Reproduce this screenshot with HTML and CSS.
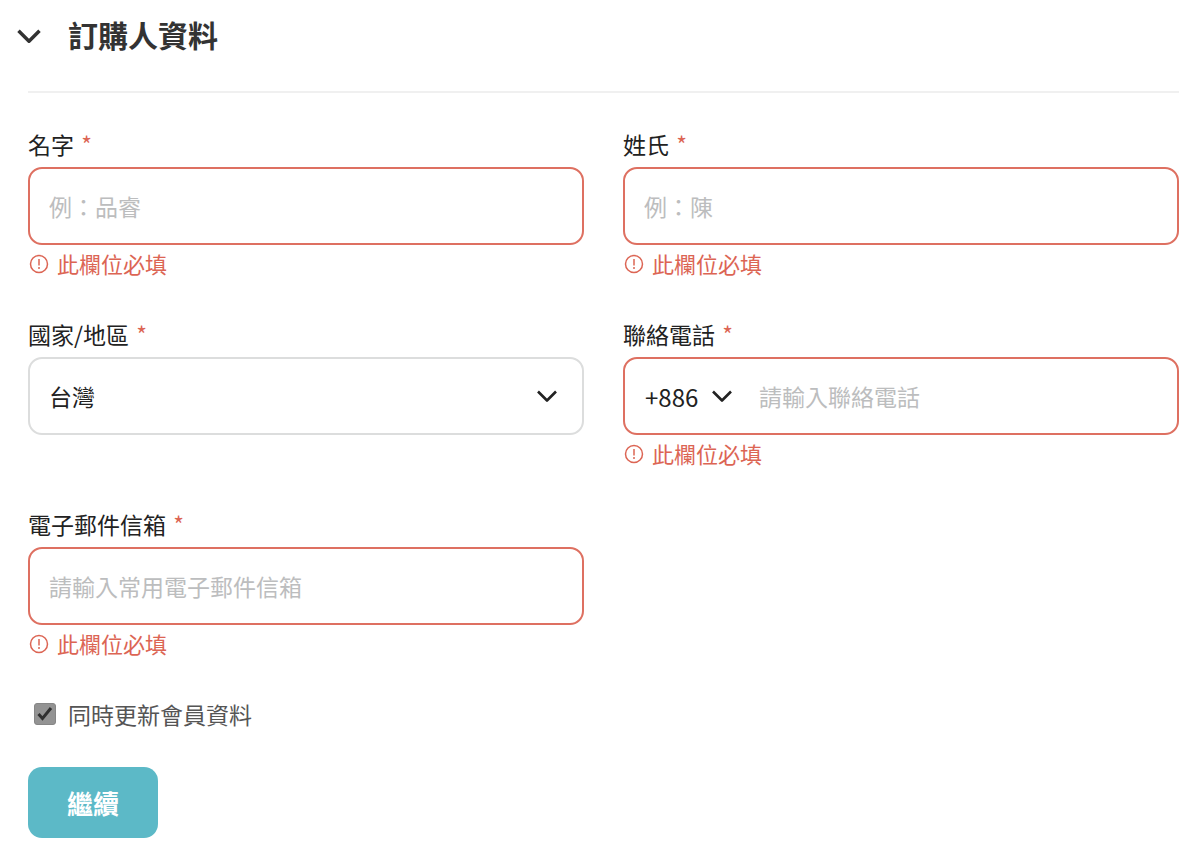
FILE: index.html
```
<!DOCTYPE html>
<html lang="zh-Hant">
<head>
    <meta charset="UTF-8">
    <meta name="viewport" content="width=device-width, initial-scale=1">
    <title>訂購人資料</title>
    <link rel="stylesheet" href="styles.css">
</head>
<body>
    <svg class="icon-defs" aria-hidden="true">
        <symbol id="icon-chevron" viewBox="0 0 24 24">
            <path d="M3 7.5l9 9 9-9"/>
        </symbol>
        <symbol id="icon-alert" viewBox="0 0 20 20">
            <circle cx="10" cy="10" r="8.5"/>
            <path d="M10 5v6.5M10 13v2"/>
        </symbol>
    </svg>

    <form class="order-form" novalidate>
        <header class="section-header">
            <button type="button" class="toggle" aria-label="收合">
                <svg class="chevron chevron-large"><use href="#icon-chevron"/></svg>
            </button>
            <h2>訂購人資料</h2>
        </header>

        <div class="fields">
            <div class="field">
                <label for="first-name">名字 <span class="required">*</span></label>
                <input class="control invalid" type="text" id="first-name" placeholder="例：品睿">
                <p class="error"><svg class="alert"><use href="#icon-alert"/></svg>此欄位必填</p>
            </div>

            <div class="field">
                <label for="last-name">姓氏 <span class="required">*</span></label>
                <input class="control invalid" type="text" id="last-name" placeholder="例：陳">
                <p class="error"><svg class="alert"><use href="#icon-alert"/></svg>此欄位必填</p>
            </div>

            <div class="field">
                <label for="country">國家/地區 <span class="required">*</span></label>
                <div class="select-wrap">
                    <select class="control" id="country">
                        <option>台灣</option>
                    </select>
                    <svg class="chevron"><use href="#icon-chevron"/></svg>
                </div>
            </div>

            <div class="field">
                <label for="phone">聯絡電話 <span class="required">*</span></label>
                <div class="control invalid phone">
                    <div class="code-wrap">
                        <select class="code" id="code" aria-label="國碼">
                            <option>+886</option>
                        </select>
                        <svg class="chevron"><use href="#icon-chevron"/></svg>
                    </div>
                    <input class="phone-input" type="tel" id="phone" placeholder="請輸入聯絡電話">
                </div>
                <p class="error"><svg class="alert"><use href="#icon-alert"/></svg>此欄位必填</p>
            </div>

            <div class="field">
                <label for="email">電子郵件信箱 <span class="required">*</span></label>
                <input class="control invalid" type="email" id="email" placeholder="請輸入常用電子郵件信箱">
                <p class="error"><svg class="alert"><use href="#icon-alert"/></svg>此欄位必填</p>
            </div>
        </div>

        <div class="update">
            <div class="check-wrap">
                <input type="checkbox" id="update-member" checked>
                <svg class="tick" viewBox="0 0 22 22"><path d="M4.5 11l4 4.500L17 5"/></svg>
            </div>
            <label for="update-member">同時更新會員資料</label>
        </div>

        <button type="submit" class="submit">繼續</button>
    </form>
</body>
</html>
```
FILE: styles.css
```
* {
    box-sizing: border-box;
}
body {
    margin: 0;
    background: #fff;
    color: #222;
    font-family: "Noto Sans CJK TC", sans-serif;
    font-size: 23px;
}
input,
select,
button {
    font: inherit;
    color: inherit;
}
.icon-defs {
    display: none;
}
.chevron {
    width: 24px;
    height: 24px;
    flex: none;
    fill: none;
    stroke: #222;
    stroke-width: 2.6;
    stroke-linejoin: round;
    pointer-events: none;
}
.chevron-large {
    width: 28px;
    height: 28px;
    stroke: #333;
    stroke-width: 3;
}
.order-form {
    padding: 0 21px 14px 28px;
}
.section-header {
    display: flex;
    align-items: center;
    gap: 25px;
    height: 93px;
    padding-bottom: 20px;
    margin-bottom: 32px;
    border-bottom: 2px solid #f0f0f0;
}
.toggle {
    display: flex;
    padding: 0;
    margin-left: -13px;
    border: none;
    background: none;
    cursor: pointer;
}
h2 {
    margin: 0;
    padding-bottom: 4px;
    font-size: 30px;
    line-height: 40px;
    font-weight: 700;
    color: #333;
}
.fields {
    display: grid;
    grid-template-columns: 1fr 1fr;
    gap: 34px 39px;
}
.field {
    min-width: 0;
}
.field label {
    display: block;
    padding-bottom: 4px;
    line-height: 38px;
}
.required {
    margin-left: 2px;
    color: #dc6554;
}
.control {
    display: block;
    width: 100%;
    height: 78px;
    padding: 0 19px;
    border: 2px solid #dcdddd;
    border-radius: 14px;
    background: #fff;
    outline: none;
}
.control.invalid {
    border-color: #de7061;
}
::placeholder {
    color: #bcbdbe;
    opacity: 1;
}
.select-wrap {
    position: relative;
}
select {
    appearance: none;
    cursor: pointer;
}
.select-wrap .chevron {
    position: absolute;
    top: 27px;
    right: 25px;
}
.phone {
    display: flex;
    align-items: center;
    gap: 25px;
    padding-left: 20px;
}
.code-wrap {
    display: flex;
    align-items: center;
}
.code {
    width: 89px;
    height: 40px;
    margin-right: -24px;
    padding: 0;
    border: none;
    background: none;
    font-size: 24px;
    outline: none;
}
.phone-input {
    flex: 1;
    min-width: 0;
    height: 100%;
    padding: 0;
    border: none;
    background: none;
    outline: none;
}
.error {
    display: flex;
    align-items: center;
    gap: 8px;
    margin: 2px 0;
    padding-left: 1px;
    font-size: 22px;
    line-height: 32px;
    color: #dc6554;
}
.alert {
    width: 20px;
    height: 20px;
    margin-top: 2px;
    fill: none;
    stroke: currentColor;
    stroke-width: 1.5;
}
.update {
    display: flex;
    align-items: center;
    gap: 12px;
    margin-top: 36px;
    padding-left: 6px;
    line-height: 34px;
    color: #555;
}
.check-wrap {
    display: grid;
}
.check-wrap input {
    grid-area: 1 / 1;
    appearance: none;
    width: 22px;
    height: 22px;
    margin: 0;
    border: 1px solid #868686;
    border-radius: 3px;
    background: #939393;
}
.tick {
    grid-area: 1 / 1;
    width: 22px;
    height: 22px;
    fill: none;
    stroke: #303030;
    stroke-width: 3;
    pointer-events: none;
    visibility: hidden;
}
.check-wrap input:checked + .tick {
    visibility: visible;
}
.submit {
    display: block;
    height: 71px;
    margin-top: 36px;
    padding: 0 39px;
    border: none;
    border-radius: 14px;
    background: #5cb9c7;
    color: #fff;
    font-size: 26px;
    font-weight: 700;
    cursor: pointer;
}
@media (max-width: 640px) {
    .fields {
        grid-template-columns: 1fr;
    }
}
```
